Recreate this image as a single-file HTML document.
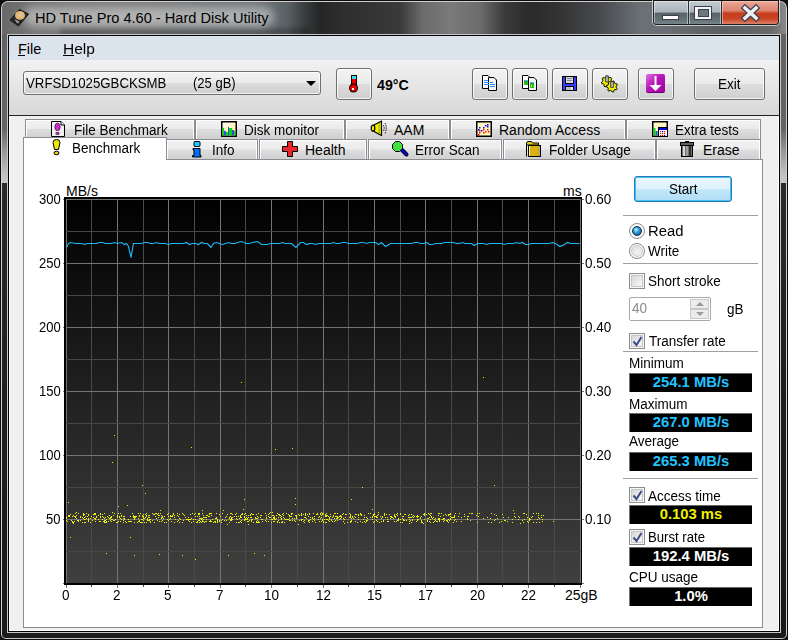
<!DOCTYPE html>
<html><head><meta charset="utf-8">
<style>
*{box-sizing:border-box}
html,body{margin:0;padding:0;width:788px;height:640px;overflow:hidden;background:#101010}
body{position:relative;font-family:"Liberation Sans",sans-serif;color:#000}
.a{position:absolute}
.t{position:absolute;white-space:nowrap;line-height:1}
svg{position:absolute;overflow:visible}
#frame{left:0;top:0;width:788px;height:640px;border-radius:8px 8px 6px 6px;background:#0c0c0c;}
#glassE{left:1px;top:1px;width:786px;height:638px;border-radius:7px 7px 5px 5px;border:1px solid #d0d0d0;border-bottom-color:#c8c8c8}
#glass{left:2px;top:2px;width:784px;height:636px;border-radius:6px 6px 4px 4px;
 background:linear-gradient(180deg,#626262 0,#646464 126px,#9a9a9a 150px,#c0c0c0 172px,#c8c8c8 181px,#2a2a2a 181px,#1e1e1e 400px,#1a1a1a 640px);}
#tbar{left:2px;top:2px;width:784px;height:32px;border-radius:6px 6px 0 0;
 background:linear-gradient(90deg,#686868 0,#747474 28px,#7a7a7a 120px,#6e7478 250px,#5a6266 285px,#3a3e40 302px,#262626 318px,#2e2e2e 340px,#3a3a3a 398px,#6a6a6a 420px,#7a7a7a 448px,#6c6c6c 478px,#3a3a3a 503px,#2a2a2a 528px,#343434 560px,#484a4e 598px,#6a7075 638px,#6a7075 660px,#5a5e62 720px,#6a6a6a 770px,#8a8a8a 784px);}
#inner1{left:7px;top:34px;width:774px;height:599px;border:1px solid #c8c8c8;}
#inner2{left:8px;top:35px;width:772px;height:597px;border:1px solid #000;background:#f0f0f0;box-shadow:inset 1px 1px 0 #fff,inset -1px -1px 0 #fff}
#menubar{left:9px;top:36px;width:770px;height:24px;background:#dbe3ed}
#toolbar{left:9px;top:60px;width:770px;height:55px;background:linear-gradient(180deg,#f1f1f1 0,#e6e6e6 25px,#d8d8d8 55px)}
#tbline{left:9px;top:115px;width:770px;height:1px;background:#222}
.btn{position:absolute;border:1px solid #707070;border-radius:3px;
 background:linear-gradient(180deg,#f2f2f2 0,#ebebeb 50%,#dddddd 50%,#cfcfcf 100%);box-shadow:inset 0 0 0 1px rgba(255,255,255,.75)}
.tab{position:absolute;border:1px solid #898c95;border-bottom:none;
 background:linear-gradient(180deg,#f2f2f2 0,#ebebeb 45%,#dddddd 50%,#cfcfcf 100%);box-shadow:inset 1px 1px 0 #fff,inset -1px 0 0 #fff}
.tt{position:absolute;white-space:nowrap;line-height:1;font-size:14px;transform:scaleX(.965);transform-origin:0 0}
#panel{left:23px;top:159px;width:740px;height:469px;border:1px solid #898c95;background:#fff}
.lbl{position:absolute;white-space:nowrap;line-height:1;font-size:14px;transform:scaleX(.965);transform-origin:0 0}
.box{position:absolute;left:629px;width:123px;height:19px;background:#000;border-top:1px solid #666;border-left:1px solid #777;color:#20c4ff;font-weight:bold;font-size:14.8px;text-align:center;line-height:1;padding-top:1px}
.sep{position:absolute;left:623px;width:135px;height:1px;background:#a0a0a0}
.cb{position:absolute;left:629px;width:16px;height:16px;border:1px solid #8e8f8f;background:linear-gradient(135deg,#cfcfcf 0,#f2f2f2 70%,#fafafa 100%);box-shadow:inset 0 0 0 1px #f6f6f6, inset 0 0 0 2px #c6c6c6}
</style></head>
<body>
<div id="frame" class="a"></div>
<div id="glass" class="a"></div>
<div id="tbar" class="a"></div>
<div id="glassE" class="a"></div>
<!-- title glow -->
<div class="a" style="left:60px;top:26px;width:250px;height:8px;background:linear-gradient(180deg,rgba(20,20,20,0) 0,rgba(20,20,20,.55) 100%);filter:blur(2px)"></div>
<div class="a" style="left:24px;top:7px;width:250px;height:20px;border-radius:10px;background:rgba(235,235,235,.5);filter:blur(5px)"></div>
<div id="inner1" class="a"></div>
<div id="inner2" class="a"></div>
<div id="menubar" class="a"></div>
<div id="toolbar" class="a"></div>
<div id="tbline" class="a"></div>

<!-- hdd icon -->
<svg style="left:8px;top:6px" width="24" height="24" viewBox="0 0 24 24">
 <path d="M11.5 3.5 L20.5 8 L10.5 20 L2 14 Z" fill="#2a2a2a" stroke="#111" stroke-width="1"/>
 <ellipse cx="12" cy="9.4" rx="5" ry="4.3" fill="#e4b870"/>
 <ellipse cx="12.6" cy="9" rx="1.8" ry="1.5" fill="#c8c8d0"/>
 <path d="M7 14 L11 16 M8 15.5 L10.5 17" stroke="#bbb" stroke-width="1"/>
</svg>
<div class="t" style="left:35px;top:11px;font-size:14.6px;color:#000">HD Tune Pro 4.60 - Hard Disk Utility</div>

<!-- caption buttons -->
<div class="a" style="left:652px;top:0;width:128px;height:26px;border:1px solid rgba(235,235,235,.75);border-top:none;border-radius:0 0 5px 5px"></div>
<div class="a" style="left:653px;top:0;width:126px;height:25px;border:1px solid #1e1e1e;border-top:1px solid #111;border-radius:0 0 4px 4px;overflow:hidden">
 <div class="a" style="left:0;top:0;width:34px;height:24px;background:linear-gradient(180deg,#c4ccd0 0,#aab4b8 45%,#56646a 52%,#667478 80%,#7c8a90 100%);box-shadow:inset 0 0 0 1px rgba(255,255,255,.45)"></div>
 <div class="a" style="left:34px;top:0;width:1px;height:24px;background:#2a3034"></div>
 <div class="a" style="left:35px;top:0;width:32px;height:24px;background:linear-gradient(180deg,#c4ccd0 0,#aab4b8 45%,#56646a 52%,#667478 80%,#7c8a90 100%);box-shadow:inset 0 0 0 1px rgba(255,255,255,.45)"></div>
 <div class="a" style="left:67px;top:0;width:1px;height:24px;background:#2a3034"></div>
 <div class="a" style="left:68px;top:0;width:58px;height:24px;background:linear-gradient(180deg,#eaa898 0,#dc8470 40%,#c83c1c 52%,#c84828 75%,#e08c78 100%);box-shadow:inset 0 0 0 1px rgba(255,220,210,.5)"></div>
</div>
<div class="a" style="left:662px;top:15px;width:17px;height:5px;background:#fff;border:1px solid #3a4050"></div>
<div class="a" style="left:694px;top:6px;width:18px;height:14px;border:1px solid #3a4050;background:#f4f4f4"></div>
<div class="a" style="left:698px;top:9px;width:11px;height:8px;background:#6a787e;border:1px solid #3a4050"></div>
<svg style="left:742px;top:5px" width="17" height="16" viewBox="0 0 17 16">
 <path d="M3 3 L14 13 M14 3 L3 13" stroke="#3a4050" stroke-width="6" stroke-linecap="square"/>
 <path d="M3 3 L14 13 M14 3 L3 13" stroke="#f0f0f0" stroke-width="3.6" stroke-linecap="square"/>
</svg>

<!-- menu -->
<div class="t" style="left:18px;top:42px;font-size:14.5px">File</div>
<div class="a" style="left:18px;top:55px;width:7px;height:1px;background:#000"></div>
<div class="t" style="left:63px;top:42px;font-size:14.5px;transform:scaleX(1.07);transform-origin:0 0">Help</div>
<div class="a" style="left:63px;top:55px;width:11px;height:1px;background:#000"></div>

<!-- toolbar -->
<div class="btn" style="left:23px;top:71px;width:298px;height:24px"></div>
<div class="t" style="left:26px;top:76px;font-size:14px;transform:scaleX(.945);transform-origin:0 0">VRFSD1025GBCKSMB</div>
<div class="t" style="left:193px;top:76px;font-size:14px;transform:scaleX(.93);transform-origin:0 0">(25 gB)</div>
<div class="a" style="left:306px;top:81px;width:0;height:0;border-left:5px solid transparent;border-right:5px solid transparent;border-top:5px solid #000"></div>

<div class="btn" style="left:336px;top:68px;width:36px;height:32px"></div>
<svg style="left:348px;top:74px" width="11" height="19" viewBox="0 0 11 19">
 <rect x="3" y="1" width="6" height="12" fill="#000"/>
 <rect x="4" y="2" width="4" height="3" fill="#30e0f0"/>
 <rect x="4" y="5" width="4" height="8" fill="#e80000"/>
 <circle cx="5.5" cy="14" r="4.5" fill="#000"/>
 <circle cx="5.5" cy="14" r="3.5" fill="#e80000"/>
 <rect x="4" y="14" width="2" height="2" fill="#fff"/>
</svg>
<div class="t" style="left:377px;top:78px;font-size:14.2px;font-weight:bold">49°C</div>

<div class="btn" style="left:472px;top:68px;width:36px;height:32px"></div>
<svg style="left:482px;top:75px" width="16" height="17" viewBox="0 0 16 17">
 <path d="M0.5 0.5 H6 L7.5 2 V13.5 H0.5 Z" fill="#fff" stroke="#000"/>
 <path d="M6.5 2.5 H12 L14.5 5 V15.5 H6.5 Z" fill="#f4f4f4" stroke="#000"/>
 <rect x="2" y="5" width="4" height="1" fill="#1e90ff"/><rect x="2" y="7" width="5" height="1" fill="#1e90ff"/><rect x="2" y="9" width="5" height="1" fill="#1e90ff"/>
 <rect x="8" y="7" width="3" height="1" fill="#1e90ff"/><rect x="8" y="9" width="5" height="1" fill="#1e90ff"/><rect x="8" y="11" width="5" height="1" fill="#1e90ff"/>
</svg>
<div class="btn" style="left:512px;top:68px;width:36px;height:32px"></div>
<svg style="left:522px;top:75px" width="16" height="17" viewBox="0 0 16 17">
 <path d="M0.5 0.5 H6 L7.5 2 V13.5 H0.5 Z" fill="#fff" stroke="#000"/>
 <path d="M6.5 2.5 H12 L14.5 5 V15.5 H6.5 Z" fill="#f4f4f4" stroke="#000"/>
 <rect x="2" y="5" width="4" height="5" fill="#20c020"/><rect x="2" y="5" width="4" height="1" fill="#30c0f0"/><rect x="3" y="6" width="1" height="1" fill="#e00"/>
 <rect x="8" y="7" width="4" height="6" fill="#20c020"/><rect x="8" y="7" width="4" height="1" fill="#30c0f0"/><rect x="9" y="8" width="1" height="1" fill="#e00"/><rect x="9" y="10" width="1" height="2" fill="#ee0"/>
</svg>
<div class="btn" style="left:552px;top:68px;width:36px;height:32px"></div>
<svg style="left:562px;top:76px" width="16" height="15" viewBox="0 0 16 15">
 <rect x="0.5" y="0.5" width="14" height="14" fill="#3a3aff" stroke="#000"/>
 <rect x="3.5" y="0.5" width="8" height="7" fill="#d8d8d8" stroke="#000"/>
 <rect x="5" y="2" width="5" height="1" fill="#888"/><rect x="5" y="4" width="5" height="1" fill="#888"/>
 <rect x="3.5" y="10.5" width="8" height="4" fill="#bbb" stroke="#000"/>
 <rect x="9" y="11" width="2" height="3" fill="#eee"/>
</svg>
<div class="btn" style="left:592px;top:68px;width:36px;height:32px"></div>
<svg style="left:601px;top:75px" width="17" height="17" viewBox="0 0 17 17">
 <path d="M11.58,6.99 L11.33,8.22 L9.61,8.65 L9.04,9.40 L9.09,11.17 L7.98,11.74 L6.57,10.66 L5.63,10.68 L4.28,11.83 L3.14,11.31 L3.10,9.54 L2.50,8.82 L0.76,8.48 L0.45,7.26 L1.82,6.13 L2.00,5.21 L1.19,3.64 L1.94,2.64 L3.68,3.00 L4.52,2.57 L5.24,0.95 L6.49,0.92 L7.29,2.50 L8.15,2.89 L9.86,2.44 L10.67,3.41 L9.93,5.02 L10.16,5.93Z" fill="#f0f000" stroke="#000" stroke-width="1"/>
 <path d="M16.18,13.62 L15.58,14.72 L13.81,14.62 L13.05,15.17 L12.58,16.87 L11.34,17.09 L10.32,15.64 L9.41,15.39 L7.78,16.08 L6.84,15.25 L7.33,13.55 L6.97,12.68 L5.41,11.84 L5.47,10.59 L7.11,9.91 L7.56,9.09 L7.25,7.34 L8.27,6.61 L9.82,7.47 L10.74,7.31 L11.91,5.97 L13.12,6.32 L13.41,8.06 L14.12,8.69 L15.89,8.77 L16.37,9.92 L15.19,11.24 L15.14,12.18Z" fill="#f0f000" stroke="#000" stroke-width="1"/>
 <rect x="4.7" y="1" width="2.6" height="6" fill="#b0b0c0" stroke="#222" stroke-width=".7"/>
 <rect x="9.7" y="6.5" width="2.6" height="6" fill="#b0b0c0" stroke="#222" stroke-width=".7"/>
</svg>
<div class="btn" style="left:638px;top:68px;width:36px;height:32px"></div>
<div class="a" style="left:646px;top:74px;width:19px;height:19px;border-radius:2px;background:linear-gradient(135deg,#e070e0 0,#b818b8 45%,#a000a0 100%);border-bottom:1px solid #700070"></div>
<svg style="left:648px;top:76px" width="15" height="15" viewBox="0 0 15 15">
 <rect x="6.5" y="0" width="2" height="10" fill="#fff"/>
 <path d="M1.5 9 L13.5 9 L7.5 15 Z" fill="#fff"/>
</svg>
<div class="btn" style="left:694px;top:68px;width:71px;height:32px"></div>
<div class="t" style="left:718px;top:77px;font-size:14px;transform:scaleX(.965);transform-origin:0 0">Exit</div>

<!-- tabs row 1 -->
<div class="tab" style="left:25px;top:119px;width:170px;height:20px"></div>
<div class="tab" style="left:195px;top:119px;width:150px;height:20px"></div>
<div class="tab" style="left:345px;top:119px;width:105px;height:20px"></div>
<div class="tab" style="left:450px;top:119px;width:176px;height:20px"></div>
<div class="tab" style="left:626px;top:119px;width:135px;height:20px"></div>
<div class="tt" style="left:74px;top:123px">File Benchmark</div>
<div class="tt" style="left:244px;top:123px">Disk monitor</div>
<div class="tt" style="left:394px;top:123px;transform:none">AAM</div>
<div class="tt" style="left:499px;top:123px;transform:none">Random Access</div>
<div class="tt" style="left:675px;top:123px">Extra tests</div>
<!-- row1 icons -->
<svg style="left:51px;top:121px" width="15" height="16" viewBox="0 0 15 16">
 <path d="M0.5 0.5 H10 L13.5 4 V15.5 H0.5 Z" fill="#f0f0f0" stroke="#000"/>
 <path d="M10 0.5 V4 H13.5" fill="#fff" stroke="#000"/>
 <ellipse cx="6.5" cy="6" rx="2.6" ry="3.8" fill="#e020e0" stroke="#222" stroke-width=".8"/>
 <rect x="5" y="11.5" width="3" height="2" fill="#e020e0" stroke="#222" stroke-width=".6"/>
</svg>
<svg style="left:221px;top:121px" width="16" height="16" viewBox="0 0 16 16">
 <defs><linearGradient id="yb" x1="0" y1="0" x2="1" y2="1"><stop offset="0" stop-color="#ffffff"/><stop offset="1" stop-color="#fff080"/></linearGradient></defs>
 <rect x="0.75" y="0.75" width="14.5" height="14.5" fill="url(#yb)" stroke="#000" stroke-width="1.5"/>
 <rect x="1.5" y="6.8" width="1.5" height="7.7" fill="#00e000"/>
 <rect x="3" y="9.9" width="2" height="4.6" fill="#4040ff"/>
 <rect x="5" y="11" width="2" height="3.5" fill="#00e000"/>
 <rect x="7" y="6" width="1" height="8.5" fill="#4040ff"/>
 <rect x="8" y="7" width="3" height="7.5" fill="#00e000"/>
 <rect x="11" y="9" width="2" height="5.5" fill="#4040ff"/>
 <rect x="13" y="10" width="1.5" height="4.5" fill="#00e000"/>
</svg>
<svg style="left:370px;top:120px" width="18" height="17" viewBox="0 0 18 17">
 <path d="M4 5 L11.5 1 V15.5 L4 11.5 Z" fill="#f0f000" stroke="#000" stroke-width="1.2" stroke-linejoin="round"/>
 <ellipse cx="3" cy="8.2" rx="1.8" ry="3" fill="#f0f000" stroke="#000" stroke-width="1.2"/>
 <path d="M9.2 3 V14" stroke="#333" stroke-width=".8" stroke-dasharray="1.2 1"/>
 <path d="M13.3 5 Q15 8.2 13.3 11.5" fill="none" stroke="#000" stroke-width="1" stroke-dasharray="1.4 .9"/>
 <path d="M15 3 Q17.6 8.2 15 13.5" fill="none" stroke="#000" stroke-width="1" stroke-dasharray="1.4 .9"/>
</svg>
<svg style="left:476px;top:121px" width="16" height="16" viewBox="0 0 16 16">
 <rect x="0.75" y="0.75" width="14.5" height="14.5" fill="#fff8c0" stroke="#000" stroke-width="1.5"/>
 <g fill="#0000ff"><rect x="3" y="6" width="1.5" height="1.5"/><rect x="2" y="8" width="1.5" height="1.5"/><rect x="5" y="9" width="1.5" height="1.5"/><rect x="7" y="6" width="1.5" height="1.5"/><rect x="9" y="4" width="1.5" height="1.5"/><rect x="11" y="3" width="1.5" height="1.5"/><rect x="11" y="5" width="1.5" height="1.5"/></g>
 <g fill="#ff0000"><rect x="3" y="9" width="1.5" height="1.5"/><rect x="3" y="11" width="1.5" height="1.5"/><rect x="7" y="8" width="1.5" height="1.5"/><rect x="7" y="11" width="1.5" height="1.5"/><rect x="9" y="10" width="1.5" height="1.5"/><rect x="11" y="8" width="1.5" height="1.5"/><rect x="12" y="10" width="1.5" height="1.5"/><rect x="2" y="13" width="1.5" height="1.5"/></g>
</svg>
<svg style="left:652px;top:121px" width="16" height="16" viewBox="0 0 16 16">
 <rect x="0.75" y="0.75" width="14.5" height="14.5" fill="#fff8c0" stroke="#000" stroke-width="1.5"/>
 <rect x="1.5" y="7" width="2" height="7.5" fill="#00e000"/><rect x="3.5" y="10" width="2" height="4.5" fill="#4040ff"/><rect x="5.5" y="11" width="1" height="3.5" fill="#00e000"/>
 <rect x="6.5" y="6.5" width="9" height="9" fill="#fff" stroke="#000"/>
 <rect x="7" y="7" width="8" height="2" fill="#0000e0"/>
 <g fill="#f00"><rect x="8" y="10" width="1.2" height="1.2"/><rect x="12" y="10" width="1.2" height="1.2"/><rect x="10" y="12" width="1.2" height="1.2"/><rect x="8" y="14" width="1.2" height="1"/></g>
 <g fill="#00f"><rect x="10" y="10" width="1.2" height="1.2"/><rect x="12" y="14" width="1.2" height="1"/></g>
 <rect x="8" y="12" width="1.2" height="1.2" fill="#0a0"/><rect x="12" y="12" width="1.2" height="1.2" fill="#f00"/><rect x="10" y="14" width="1.2" height="1" fill="#f00"/>
</svg>

<!-- tabs row 2 -->
<div class="tab" style="left:166px;top:139px;width:92px;height:21px"></div>
<div class="tab" style="left:259px;top:139px;width:108px;height:21px"></div>
<div class="tab" style="left:368px;top:139px;width:134px;height:21px"></div>
<div class="tab" style="left:503px;top:139px;width:153px;height:21px"></div>
<div class="tab" style="left:656px;top:139px;width:105px;height:21px"></div>
<div id="panel" class="a"></div>
<div class="a" style="left:23px;top:137px;width:144px;height:23px;border:1px solid #898c95;border-bottom:none;background:#fff"></div>
<div class="tt" style="left:72px;top:141px">Benchmark</div>
<div class="tt" style="left:212px;top:143px">Info</div>
<div class="tt" style="left:305px;top:143px;transform:none">Health</div>
<div class="tt" style="left:415px;top:143px">Error Scan</div>
<div class="tt" style="left:549px;top:143px;transform:scaleX(.975)">Folder Usage</div>
<div class="tt" style="left:703px;top:143px;transform:none">Erase</div>
<!-- row2 icons -->
<svg style="left:52px;top:139px" width="9" height="17" viewBox="0 0 9 17">
 <path d="M1 3.5 Q1 0.5 4.5 0.5 Q8 0.5 8 3.5 L6.5 10.5 H2.5 Z" fill="#e8e800" stroke="#000"/>
 <ellipse cx="4.5" cy="14" rx="2.5" ry="1.8" fill="#d8d800" stroke="#000"/>
</svg>
<svg style="left:192px;top:141px" width="10" height="17" viewBox="0 0 10 17">
 <rect x="2" y="0.5" width="6" height="5" rx="1" fill="#20c8ff" stroke="#000"/>
 <path d="M1 7.5 H8 V14.5 H9 V16 H0.5 V14.5 H2 V9 H1 Z" fill="#0070ff" stroke="#000"/>
</svg>
<svg style="left:282px;top:141px" width="17" height="16" viewBox="0 0 17 16">
 <path d="M5.5 0.5 H10.5 V5.5 H15.5 V10.5 H10.5 V15.5 H5.5 V10.5 H0.5 V5.5 H5.5 Z" fill="#e82828" stroke="#000"/>
</svg>
<svg style="left:392px;top:141px" width="17" height="17" viewBox="0 0 17 17">
 <path d="M9.5 8.5 L14.5 13.5" stroke="#000" stroke-width="4" stroke-linecap="round"/>
 <path d="M9.5 8.5 L14.5 13.5" stroke="#0000e0" stroke-width="2.4" stroke-linecap="round"/>
 <path d="M3.5 0.5 H7.5 L10.5 3.5 V7.5 L7.5 10.5 H3.5 L0.5 7.5 V3.5 Z" fill="#40e040" stroke="#000"/>
</svg>
<svg style="left:526px;top:141px" width="16" height="16" viewBox="0 0 16 16">
 <path d="M0.5 15.5 V2 L1.5 0.5 H5.5 L6.5 2 H12.5 V4 H0.5" fill="#e8c820" stroke="#000"/>
 <rect x="2.5" y="4.5" width="12" height="11" fill="#dcb010" stroke="#000"/>
 <rect x="3" y="5" width="1" height="10" fill="#fff8a0"/><rect x="12" y="5" width="1" height="10" fill="#a0a0a0"/>
</svg>
<svg style="left:680px;top:141px" width="15" height="16" viewBox="0 0 15 16">
 <rect x="0.5" y="1.5" width="13" height="3" fill="#606060" stroke="#000"/>
 <rect x="5" y="0" width="4" height="2" fill="#000"/>
 <rect x="1.5" y="4.5" width="11" height="11" fill="#707070" stroke="#000"/>
 <rect x="3" y="5" width="2" height="10" fill="#d8d8d8"/><rect x="6" y="5" width="2" height="10" fill="#a0a0a0"/><rect x="9" y="5" width="2" height="10" fill="#303030"/>
</svg>

<svg width="600" height="600" style="position:absolute;left:0;top:0">
<defs><linearGradient id="cbg" x1="0" y1="0" x2="0" y2="1"><stop offset="0" stop-color="#000"/><stop offset="1" stop-color="#404040"/></linearGradient></defs>
<rect x="64" y="197" width="518" height="388" fill="url(#cbg)"/>
<line x1="66.5" y1="199" x2="66.5" y2="583" stroke="#747474"/><line x1="66.5" y1="585" x2="66.5" y2="588" stroke="#747474"/><line x1="91.5" y1="199" x2="91.5" y2="583" stroke="#4a4a4a"/><line x1="91.5" y1="585" x2="91.5" y2="587" stroke="#4a4a4a"/><line x1="117.5" y1="199" x2="117.5" y2="583" stroke="#747474"/><line x1="117.5" y1="585" x2="117.5" y2="588" stroke="#747474"/><line x1="143.5" y1="199" x2="143.5" y2="583" stroke="#4a4a4a"/><line x1="143.5" y1="585" x2="143.5" y2="587" stroke="#4a4a4a"/><line x1="168.5" y1="199" x2="168.5" y2="583" stroke="#747474"/><line x1="168.5" y1="585" x2="168.5" y2="588" stroke="#747474"/><line x1="194.5" y1="199" x2="194.5" y2="583" stroke="#4a4a4a"/><line x1="194.5" y1="585" x2="194.5" y2="587" stroke="#4a4a4a"/><line x1="220.5" y1="199" x2="220.5" y2="583" stroke="#747474"/><line x1="220.5" y1="585" x2="220.5" y2="588" stroke="#747474"/><line x1="245.5" y1="199" x2="245.5" y2="583" stroke="#4a4a4a"/><line x1="245.5" y1="585" x2="245.5" y2="587" stroke="#4a4a4a"/><line x1="271.5" y1="199" x2="271.5" y2="583" stroke="#747474"/><line x1="271.5" y1="585" x2="271.5" y2="588" stroke="#747474"/><line x1="297.5" y1="199" x2="297.5" y2="583" stroke="#4a4a4a"/><line x1="297.5" y1="585" x2="297.5" y2="587" stroke="#4a4a4a"/><line x1="323.5" y1="199" x2="323.5" y2="583" stroke="#747474"/><line x1="323.5" y1="585" x2="323.5" y2="588" stroke="#747474"/><line x1="348.5" y1="199" x2="348.5" y2="583" stroke="#4a4a4a"/><line x1="348.5" y1="585" x2="348.5" y2="587" stroke="#4a4a4a"/><line x1="374.5" y1="199" x2="374.5" y2="583" stroke="#747474"/><line x1="374.5" y1="585" x2="374.5" y2="588" stroke="#747474"/><line x1="400.5" y1="199" x2="400.5" y2="583" stroke="#4a4a4a"/><line x1="400.5" y1="585" x2="400.5" y2="587" stroke="#4a4a4a"/><line x1="425.5" y1="199" x2="425.5" y2="583" stroke="#747474"/><line x1="425.5" y1="585" x2="425.5" y2="588" stroke="#747474"/><line x1="451.5" y1="199" x2="451.5" y2="583" stroke="#4a4a4a"/><line x1="451.5" y1="585" x2="451.5" y2="587" stroke="#4a4a4a"/><line x1="477.5" y1="199" x2="477.5" y2="583" stroke="#747474"/><line x1="477.5" y1="585" x2="477.5" y2="588" stroke="#747474"/><line x1="502.5" y1="199" x2="502.5" y2="583" stroke="#4a4a4a"/><line x1="502.5" y1="585" x2="502.5" y2="587" stroke="#4a4a4a"/><line x1="528.5" y1="199" x2="528.5" y2="583" stroke="#747474"/><line x1="528.5" y1="585" x2="528.5" y2="588" stroke="#747474"/><line x1="554.5" y1="199" x2="554.5" y2="583" stroke="#4a4a4a"/><line x1="554.5" y1="585" x2="554.5" y2="587" stroke="#4a4a4a"/><line x1="580.5" y1="199" x2="580.5" y2="583" stroke="#747474"/><line x1="580.5" y1="585" x2="580.5" y2="588" stroke="#747474"/><line x1="66" y1="199.5" x2="581" y2="199.5" stroke="#747474"/><line x1="63" y1="199.5" x2="64" y2="199.5" stroke="#747474"/><line x1="582" y1="199.5" x2="584" y2="199.5" stroke="#747474"/><line x1="66" y1="231.5" x2="581" y2="231.5" stroke="#474747"/><line x1="66" y1="263.5" x2="581" y2="263.5" stroke="#747474"/><line x1="63" y1="263.5" x2="64" y2="263.5" stroke="#747474"/><line x1="582" y1="263.5" x2="584" y2="263.5" stroke="#747474"/><line x1="66" y1="295.5" x2="581" y2="295.5" stroke="#474747"/><line x1="66" y1="327.5" x2="581" y2="327.5" stroke="#747474"/><line x1="63" y1="327.5" x2="64" y2="327.5" stroke="#747474"/><line x1="582" y1="327.5" x2="584" y2="327.5" stroke="#747474"/><line x1="66" y1="359.5" x2="581" y2="359.5" stroke="#474747"/><line x1="66" y1="391.5" x2="581" y2="391.5" stroke="#747474"/><line x1="63" y1="391.5" x2="64" y2="391.5" stroke="#747474"/><line x1="582" y1="391.5" x2="584" y2="391.5" stroke="#747474"/><line x1="66" y1="423.5" x2="581" y2="423.5" stroke="#474747"/><line x1="66" y1="455.5" x2="581" y2="455.5" stroke="#747474"/><line x1="63" y1="455.5" x2="64" y2="455.5" stroke="#747474"/><line x1="582" y1="455.5" x2="584" y2="455.5" stroke="#747474"/><line x1="66" y1="487.5" x2="581" y2="487.5" stroke="#474747"/><line x1="66" y1="519.5" x2="581" y2="519.5" stroke="#747474"/><line x1="63" y1="519.5" x2="64" y2="519.5" stroke="#747474"/><line x1="582" y1="519.5" x2="584" y2="519.5" stroke="#747474"/><line x1="66" y1="551.5" x2="581" y2="551.5" stroke="#474747"/><line x1="66" y1="583.5" x2="581" y2="583.5" stroke="#747474"/><line x1="63" y1="583.5" x2="64" y2="583.5" stroke="#747474"/><line x1="582" y1="583.5" x2="584" y2="583.5" stroke="#747474"/>
<path d="M66.5,247.5 L67.5,245.5 L68.5,243.5 L70.5,242.5 L75.5,243.5 L78.5,243.5 L81.5,243.5 L84.5,244.5 L87.5,243.5 L90.5,243.5 L93.5,243.5 L96.5,243.5 L99.5,242.5 L102.5,242.5 L105.5,243.5 L108.5,243.5 L111.5,243.5 L114.5,242.5 L117.5,243.5 L121.5,242.5 L124.5,244.5 L126.5,243.5 L128.5,246.5 L131.0,257.5 L133.5,243.5 L138.5,243.5 L141.5,243.5 L144.5,242.5 L147.5,242.5 L150.5,243.5 L153.5,243.5 L156.5,242.5 L159.5,243.5 L162.5,243.5 L165.5,243.5 L168.5,244.5 L171.5,243.5 L174.5,243.5 L177.5,243.5 L180.5,243.5 L183.5,243.5 L186.5,242.5 L189.5,244.5 L192.5,243.5 L195.5,243.5 L198.5,244.5 L201.5,242.5 L204.5,243.5 L207.5,243.5 L211.0,247.5 L213.5,243.5 L216.5,242.5 L219.5,243.5 L222.5,244.5 L225.5,243.5 L228.5,242.5 L231.5,243.5 L234.5,243.5 L237.5,242.5 L241.5,241.5 L246.5,243.5 L249.5,243.5 L252.5,242.5 L257.5,241.5 L261.5,244.5 L264.5,244.5 L267.5,244.5 L270.5,243.5 L273.5,243.5 L276.5,243.5 L279.5,243.5 L282.5,242.5 L285.5,243.5 L288.5,243.5 L291.5,243.5 L295.9,247.5 L300.5,242.5 L303.5,242.5 L306.5,244.5 L309.5,243.5 L312.5,243.5 L315.5,244.5 L318.5,243.5 L321.5,243.5 L324.5,243.5 L327.5,243.5 L330.5,243.5 L333.5,242.5 L336.5,243.5 L339.5,243.5 L342.5,242.5 L345.5,242.5 L348.5,243.5 L351.5,243.5 L354.5,243.5 L357.5,243.5 L360.5,242.5 L363.5,242.5 L366.5,243.5 L369.5,242.5 L372.5,242.5 L375.5,242.5 L378.5,244.5 L381.5,242.5 L385.5,246.5 L390.5,243.5 L393.5,243.5 L396.5,243.5 L399.5,243.5 L402.5,243.5 L405.5,243.5 L408.5,243.5 L411.5,243.5 L414.5,242.5 L417.5,242.5 L420.5,243.5 L423.5,243.5 L426.5,242.5 L429.5,244.5 L432.5,244.5 L435.5,243.5 L438.5,243.5 L441.5,243.5 L444.5,242.5 L447.5,242.5 L450.5,242.5 L453.5,242.5 L456.5,243.5 L459.5,243.5 L462.5,242.5 L465.5,243.5 L468.5,243.5 L471.5,243.5 L474.2,245.5 L477.5,243.5 L480.5,243.5 L483.5,243.5 L486.5,244.5 L489.5,243.5 L492.5,243.5 L495.5,243.5 L498.5,243.5 L501.5,243.5 L504.5,244.5 L507.5,243.5 L510.5,243.5 L513.5,243.5 L516.5,242.5 L519.5,243.5 L522.5,242.5 L525.5,244.5 L528.5,244.5 L531.5,243.5 L534.5,243.5 L537.5,243.5 L540.5,243.5 L543.5,243.5 L546.5,243.5 L549.5,243.5 L552.5,242.5 L555.5,243.5 L559.9,246.5 L564.5,244.5 L567.5,242.5 L570.5,243.5 L573.5,243.5 L576.5,243.5 L579.5,243.5" fill="none" stroke="#1ab8f4" stroke-width="1.15"/>
<path d="M88,518h1v1h-1zM308,521h1v1h-1zM285,519h1v1h-1zM319,521h1v1h-1zM266,515h1v1h-1zM202,521h1v1h-1zM217,519h1v1h-1zM403,520h1v1h-1zM320,513h1v1h-1zM309,513h1v1h-1zM361,514h1v1h-1zM395,516h1v1h-1zM152,520h1v1h-1zM133,516h1v1h-1zM312,518h1v1h-1zM289,516h1v1h-1zM270,512h1v1h-1zM125,521h1v1h-1zM102,519h1v1h-1zM198,514h1v1h-1zM251,517h1v1h-1zM373,515h1v1h-1zM145,517h1v1h-1zM429,514h1v1h-1zM137,522h1v1h-1zM114,520h1v1h-1zM524,513h1v1h-1zM240,516h1v1h-1zM296,515h1v1h-1zM96,517h1v1h-1zM414,516h1v1h-1zM319,516h1v1h-1zM308,516h1v1h-1zM349,517h1v1h-1zM372,519h1v1h-1zM68,516h1v1h-1zM121,519h1v1h-1zM467,518h1v1h-1zM216,518h1v1h-1zM436,521h1v1h-1zM342,514h1v1h-1zM110,518h1v1h-1zM376,516h1v1h-1zM80,517h1v1h-1zM289,520h1v1h-1zM278,520h1v1h-1zM532,516h1v1h-1zM281,516h1v1h-1zM102,514h1v1h-1zM326,515h1v1h-1zM262,521h1v1h-1zM251,521h1v1h-1zM284,518h1v1h-1zM448,522h1v1h-1zM197,522h1v1h-1zM387,521h1v1h-1zM87,516h1v1h-1zM273,517h1v1h-1zM265,513h1v1h-1zM497,518h1v1h-1zM190,519h1v1h-1zM231,520h1v1h-1zM205,517h1v1h-1zM327,515h1v1h-1zM402,518h1v1h-1zM76,515h1v1h-1zM360,521h1v1h-1zM352,517h1v1h-1zM341,517h1v1h-1zM411,514h1v1h-1zM322,513h1v1h-1zM247,519h1v1h-1zM216,513h1v1h-1zM444,520h1v1h-1zM82,522h1v1h-1zM384,515h1v1h-1zM141,519h1v1h-1zM250,515h1v1h-1zM133,515h1v1h-1zM376,520h1v1h-1zM353,518h1v1h-1zM345,514h1v1h-1zM409,517h1v1h-1zM177,521h1v1h-1zM83,514h1v1h-1zM94,514h1v1h-1zM326,519h1v1h-1zM456,521h1v1h-1zM284,522h1v1h-1zM406,520h1v1h-1zM323,513h1v1h-1zM323,522h1v1h-1zM170,518h1v1h-1zM136,516h1v1h-1zM72,522h1v1h-1zM307,514h1v1h-1zM139,521h1v1h-1zM128,521h1v1h-1zM273,521h1v1h-1zM190,514h1v1h-1zM288,519h1v1h-1zM410,517h1v1h-1zM148,517h1v1h-1zM372,509h1v1h-1zM140,513h1v1h-1zM402,522h1v1h-1zM140,522h1v1h-1zM447,521h1v1h-1zM68,515h1v1h-1zM266,518h1v1h-1zM299,515h1v1h-1zM82,517h1v1h-1zM459,513h1v1h-1zM216,517h1v1h-1zM417,516h1v1h-1zM110,517h1v1h-1zM394,514h1v1h-1zM155,516h1v1h-1zM334,518h1v1h-1zM409,521h1v1h-1zM83,518h1v1h-1zM94,518h1v1h-1zM239,518h1v1h-1zM303,521h1v1h-1zM209,514h1v1h-1zM437,521h1v1h-1zM261,515h1v1h-1zM429,517h1v1h-1zM504,520h1v1h-1zM197,521h1v1h-1zM201,519h1v1h-1zM234,516h1v1h-1zM398,520h1v1h-1zM421,522h1v1h-1zM356,514h1v1h-1zM147,520h1v1h-1zM443,519h1v1h-1zM390,516h1v1h-1zM117,516h1v1h-1zM139,516h1v1h-1zM296,518h1v1h-1zM288,514h1v1h-1zM340,515h1v1h-1zM120,521h1v1h-1zM231,519h1v1h-1zM246,517h1v1h-1zM391,517h1v1h-1zM432,518h1v1h-1zM424,514h1v1h-1zM132,513h1v1h-1zM277,513h1v1h-1zM330,516h1v1h-1zM341,516h1v1h-1zM352,516h1v1h-1zM527,517h1v1h-1zM310,519h1v1h-1zM250,514h1v1h-1zM280,515h1v1h-1zM193,519h1v1h-1zM257,522h1v1h-1zM174,515h1v1h-1zM417,520h1v1h-1zM334,513h1v1h-1zM386,514h1v1h-1zM143,518h1v1h-1zM94,513h1v1h-1zM83,513h1v1h-1zM314,516h1v1h-1zM197,516h1v1h-1zM295,521h1v1h-1zM325,522h1v1h-1zM261,519h1v1h-1zM189,521h1v1h-1zM200,518h1v1h-1zM139,520h1v1h-1zM538,513h1v1h-1zM318,519h1v1h-1zM329,519h1v1h-1zM223,510h1v1h-1zM212,519h1v1h-1zM447,520h1v1h-1zM435,518h1v1h-1zM405,514h1v1h-1zM98,515h1v1h-1zM154,514h1v1h-1zM333,516h1v1h-1zM527,521h1v1h-1zM131,521h1v1h-1zM519,517h1v1h-1zM542,519h1v1h-1zM508,517h1v1h-1zM272,515h1v1h-1zM417,515h1v1h-1zM458,516h1v1h-1zM238,522h1v1h-1zM177,515h1v1h-1zM461,521h1v1h-1zM439,521h1v1h-1zM378,514h1v1h-1zM124,518h1v1h-1zM75,513h1v1h-1zM314,520h1v1h-1zM317,513h1v1h-1zM211,513h1v1h-1zM398,519h1v1h-1zM222,513h1v1h-1zM443,518h1v1h-1zM431,516h1v1h-1zM147,519h1v1h-1zM139,515h1v1h-1zM117,515h1v1h-1zM337,518h1v1h-1zM86,518h1v1h-1zM150,521h1v1h-1zM161,521h1v1h-1zM538,517h1v1h-1zM231,518h1v1h-1zM455,519h1v1h-1zM424,513h1v1h-1zM279,522h1v1h-1zM173,513h1v1h-1zM382,516h1v1h-1zM112,512h1v1h-1zM374,521h1v1h-1zM291,514h1v1h-1zM355,517h1v1h-1zM71,520h1v1h-1zM268,521h1v1h-1zM272,519h1v1h-1zM260,517h1v1h-1zM230,513h1v1h-1zM143,517h1v1h-1zM241,522h1v1h-1zM450,516h1v1h-1zM158,515h1v1h-1zM199,516h1v1h-1zM367,518h1v1h-1zM302,519h1v1h-1zM242,514h1v1h-1zM283,515h1v1h-1zM74,521h1v1h-1zM253,514h1v1h-1zM451,517h1v1h-1zM66,517h1v1h-1zM219,521h1v1h-1zM518,516h1v1h-1zM192,513h1v1h-1zM337,513h1v1h-1zM412,516h1v1h-1zM109,515h1v1h-1zM86,513h1v1h-1zM172,516h1v1h-1zM329,518h1v1h-1zM340,518h1v1h-1zM496,515h1v1h-1zM70,514h1v1h-1zM134,517h1v1h-1zM413,517h1v1h-1zM162,517h1v1h-1zM226,520h1v1h-1zM374,516h1v1h-1zM154,522h1v1h-1zM438,519h1v1h-1zM123,516h1v1h-1zM257,516h1v1h-1zM268,516h1v1h-1zM355,521h1v1h-1zM104,521h1v1h-1zM241,517h1v1h-1zM207,515h1v1h-1zM427,518h1v1h-1zM439,520h1v1h-1zM135,517h1v1h-1zM199,520h1v1h-1zM210,520h1v1h-1zM188,520h1v1h-1zM325,516h1v1h-1zM116,522h1v1h-1zM400,519h1v1h-1zM336,516h1v1h-1zM74,516h1v1h-1zM85,516h1v1h-1zM105,522h1v1h-1zM454,517h1v1h-1zM200,521h1v1h-1zM211,521h1v1h-1zM203,517h1v1h-1zM412,520h1v1h-1zM78,513h1v1h-1zM142,516h1v1h-1zM111,519h1v1h-1zM245,519h1v1h-1zM309,522h1v1h-1zM248,515h1v1h-1zM397,513h1v1h-1zM449,514h1v1h-1zM146,513h1v1h-1zM430,519h1v1h-1zM146,522h1v1h-1zM123,520h1v1h-1zM541,517h1v1h-1zM238,516h1v1h-1zM313,519h1v1h-1zM324,519h1v1h-1zM533,513h1v1h-1zM305,515h1v1h-1zM533,522h1v1h-1zM282,522h1v1h-1zM271,522h1v1h-1zM274,518h1v1h-1zM400,514h1v1h-1zM389,514h1v1h-1zM366,521h1v1h-1zM377,521h1v1h-1zM358,517h1v1h-1zM503,517h1v1h-1zM537,519h1v1h-1zM286,519h1v1h-1zM350,522h1v1h-1zM275,519h1v1h-1zM169,519h1v1h-1zM203,521h1v1h-1zM161,515h1v1h-1zM172,515h1v1h-1zM236,518h1v1h-1zM404,520h1v1h-1zM381,518h1v1h-1zM434,521h1v1h-1zM347,522h1v1h-1zM100,514h1v1h-1zM134,516h1v1h-1zM256,514h1v1h-1zM301,513h1v1h-1zM529,520h1v1h-1zM237,519h1v1h-1zM195,513h1v1h-1zM438,518h1v1h-1zM164,516h1v1h-1zM179,514h1v1h-1zM396,521h1v1h-1zM104,520h1v1h-1zM514,513h1v1h-1zM73,523h1v1h-1zM439,519h1v1h-1zM450,519h1v1h-1zM188,519h1v1h-1zM168,513h1v1h-1zM255,518h1v1h-1zM138,518h1v1h-1zM526,514h1v1h-1zM294,518h1v1h-1zM171,516h1v1h-1zM66,520h1v1h-1zM118,521h1v1h-1zM350,517h1v1h-1zM518,519h1v1h-1zM244,517h1v1h-1zM308,520h1v1h-1zM236,513h1v1h-1zM370,513h1v1h-1zM150,519h1v1h-1zM236,522h1v1h-1zM202,520h1v1h-1zM142,515h1v1h-1zM328,516h1v1h-1zM339,516h1v1h-1zM403,519h1v1h-1zM351,518h1v1h-1zM245,518h1v1h-1zM256,518h1v1h-1zM312,517h1v1h-1zM289,515h1v1h-1zM214,521h1v1h-1zM438,513h1v1h-1zM206,517h1v1h-1zM198,513h1v1h-1zM373,514h1v1h-1zM179,518h1v1h-1zM290,516h1v1h-1zM388,521h1v1h-1zM305,514h1v1h-1zM282,521h1v1h-1zM199,514h1v1h-1zM240,515h1v1h-1zM427,521h1v1h-1zM274,517h1v1h-1zM408,517h1v1h-1zM494,520h1v1h-1zM400,513h1v1h-1zM180,519h1v1h-1zM221,520h1v1h-1zM464,516h1v1h-1zM160,513h1v1h-1zM138,513h1v1h-1zM366,520h1v1h-1zM283,513h1v1h-1zM400,522h1v1h-1zM107,516h1v1h-1zM96,516h1v1h-1zM205,521h1v1h-1zM350,521h1v1h-1zM327,519h1v1h-1zM88,521h1v1h-1zM536,522h1v1h-1zM487,517h1v1h-1zM99,521h1v1h-1zM225,517h1v1h-1zM370,517h1v1h-1zM119,517h1v1h-1zM217,522h1v1h-1zM183,520h1v1h-1zM100,513h1v1h-1zM328,520h1v1h-1zM362,522h1v1h-1zM343,518h1v1h-1zM77,520h1v1h-1zM80,516h1v1h-1zM69,516h1v1h-1zM529,519h1v1h-1zM312,521h1v1h-1zM206,521h1v1h-1zM490,518h1v1h-1zM430,513h1v1h-1zM251,520h1v1h-1zM430,522h1v1h-1zM313,513h1v1h-1zM179,522h1v1h-1zM290,520h1v1h-1zM73,522h1v1h-1zM106,519h1v1h-1zM84,519h1v1h-1zM95,519h1v1h-1zM274,521h1v1h-1zM304,522h1v1h-1zM315,522h1v1h-1zM255,517h1v1h-1zM377,515h1v1h-1zM149,517h1v1h-1zM224,520h1v1h-1zM316,514h1v1h-1zM350,516h1v1h-1zM244,516h1v1h-1zM528,522h1v1h-1zM277,522h1v1h-1zM247,518h1v1h-1zM411,522h1v1h-1zM343,513h1v1h-1zM111,517h1v1h-1zM384,514h1v1h-1zM309,520h1v1h-1zM331,520h1v1h-1zM278,514h1v1h-1zM364,517h1v1h-1zM80,520h1v1h-1zM479,513h1v1h-1zM281,519h1v1h-1zM239,522h1v1h-1zM373,522h1v1h-1zM429,521h1v1h-1zM346,514h1v1h-1zM502,514h1v1h-1zM95,514h1v1h-1zM84,514h1v1h-1zM323,521h1v1h-1zM274,516h1v1h-1zM304,517h1v1h-1zM72,521h1v1h-1zM441,513h1v1h-1zM232,519h1v1h-1zM358,515h1v1h-1zM335,513h1v1h-1zM372,517h1v1h-1zM76,518h1v1h-1zM129,521h1v1h-1zM88,520h1v1h-1zM236,516h1v1h-1zM266,517h1v1h-1zM411,517h1v1h-1zM258,513h1v1h-1zM269,513h1v1h-1zM434,519h1v1h-1zM478,516h1v1h-1zM258,522h1v1h-1zM467,516h1v1h-1zM152,513h1v1h-1zM141,522h1v1h-1zM529,518h1v1h-1zM144,518h1v1h-1zM69,515h1v1h-1zM289,518h1v1h-1zM364,521h1v1h-1zM513,510h1v1h-1zM345,517h1v1h-1zM326,513h1v1h-1zM471,513h1v1h-1zM262,519h1v1h-1zM251,519h1v1h-1zM292,520h1v1h-1zM209,513h1v1h-1zM326,522h1v1h-1zM418,516h1v1h-1zM440,516h1v1h-1zM114,513h1v1h-1zM178,516h1v1h-1zM365,522h1v1h-1zM201,518h1v1h-1zM387,519h1v1h-1zM421,521h1v1h-1zM72,516h1v1h-1zM159,521h1v1h-1zM494,514h1v1h-1zM95,518h1v1h-1zM232,514h1v1h-1zM273,515h1v1h-1zM296,517h1v1h-1zM452,517h1v1h-1zM539,522h1v1h-1zM505,520h1v1h-1zM265,520h1v1h-1zM182,513h1v1h-1zM422,522h1v1h-1zM433,522h1v1h-1zM410,520h1v1h-1zM380,516h1v1h-1zM402,516h1v1h-1zM391,516h1v1h-1zM88,515h1v1h-1zM163,518h1v1h-1zM182,522h1v1h-1zM148,520h1v1h-1zM383,521h1v1h-1zM98,519h1v1h-1zM266,521h1v1h-1zM277,521h1v1h-1zM194,514h1v1h-1zM269,517h1v1h-1zM258,517h1v1h-1zM183,514h1v1h-1zM392,517h1v1h-1zM444,518h1v1h-1zM322,520h1v1h-1zM384,513h1v1h-1zM175,519h1v1h-1zM208,516h1v1h-1zM144,522h1v1h-1zM110,520h1v1h-1zM417,519h1v1h-1zM91,516h1v1h-1zM102,516h1v1h-1zM281,518h1v1h-1zM543,515h1v1h-1zM334,521h1v1h-1zM448,515h1v1h-1zM75,517h1v1h-1zM103,517h1v1h-1zM178,520h1v1h-1zM421,516h1v1h-1zM95,513h1v1h-1zM170,516h1v1h-1zM357,522h1v1h-1zM201,522h1v1h-1zM106,522h1v1h-1zM84,522h1v1h-1zM524,519h1v1h-1zM128,519h1v1h-1zM231,513h1v1h-1zM433,517h1v1h-1zM148,515h1v1h-1zM360,514h1v1h-1zM372,516h1v1h-1zM121,516h1v1h-1zM333,515h1v1h-1zM258,521h1v1h-1zM247,521h1v1h-1zM250,517h1v1h-1zM395,517h1v1h-1zM361,515h1v1h-1zM133,517h1v1h-1zM394,521h1v1h-1zM409,519h1v1h-1zM523,513h1v1h-1zM295,515h1v1h-1zM448,519h1v1h-1zM523,522h1v1h-1zM512,522h1v1h-1zM186,519h1v1h-1zM209,521h1v1h-1zM398,518h1v1h-1zM421,520h1v1h-1zM147,518h1v1h-1zM304,520h1v1h-1zM296,516h1v1h-1zM337,517h1v1h-1zM231,517h1v1h-1zM246,515h1v1h-1zM215,518h1v1h-1zM383,520h1v1h-1zM330,514h1v1h-1zM235,514h1v1h-1zM322,519h1v1h-1zM310,517h1v1h-1zM467,519h1v1h-1zM291,513h1v1h-1zM257,520h1v1h-1zM364,515h1v1h-1zM428,518h1v1h-1zM174,522h1v1h-1zM394,516h1v1h-1zM409,514h1v1h-1zM143,516h1v1h-1zM409,523h1v1h-1zM326,516h1v1h-1zM303,514h1v1h-1zM448,514h1v1h-1zM75,516h1v1h-1zM105,517h1v1h-1zM242,513h1v1h-1zM470,520h1v1h-1zM189,519h1v1h-1zM219,520h1v1h-1zM253,522h1v1h-1zM159,515h1v1h-1zM170,515h1v1h-1zM167,519h1v1h-1zM390,518h1v1h-1zM443,521h1v1h-1zM273,518h1v1h-1zM318,517h1v1h-1zM329,517h1v1h-1zM455,513h1v1h-1zM246,519h1v1h-1zM349,513h1v1h-1zM360,513h1v1h-1zM215,522h1v1h-1zM204,522h1v1h-1zM121,515h1v1h-1zM162,516h1v1h-1zM416,521h1v1h-1zM322,514h1v1h-1zM113,520h1v1h-1zM90,518h1v1h-1zM531,517h1v1h-1zM227,514h1v1h-1zM280,517h1v1h-1zM193,521h1v1h-1zM428,513h1v1h-1zM185,517h1v1h-1zM249,520h1v1h-1zM174,517h1v1h-1zM177,513h1v1h-1zM230,516h1v1h-1zM155,513h1v1h-1zM375,516h1v1h-1zM143,520h1v1h-1zM166,522h1v1h-1zM83,515h1v1h-1zM124,516h1v1h-1zM135,516h1v1h-1zM378,512h1v1h-1zM292,518h1v1h-1zM314,518h1v1h-1zM344,519h1v1h-1zM325,515h1v1h-1zM501,521h1v1h-1zM108,517h1v1h-1zM167,514h1v1h-1zM387,517h1v1h-1zM368,513h1v1h-1zM454,516h1v1h-1zM379,522h1v1h-1zM337,516h1v1h-1zM412,519h1v1h-1zM117,522h1v1h-1zM109,518h1v1h-1zM120,518h1v1h-1zM538,515h1v1h-1zM329,521h1v1h-1zM276,515h1v1h-1zM67,521h1v1h-1zM78,521h1v1h-1zM298,524h1v1h-1zM204,517h1v1h-1zM435,520h1v1h-1zM416,516h1v1h-1zM196,522h1v1h-1zM162,520h1v1h-1zM113,515h1v1h-1zM363,519h1v1h-1zM90,522h1v1h-1zM542,521h1v1h-1zM112,519h1v1h-1zM477,513h1v1h-1zM260,515h1v1h-1zM477,522h1v1h-1zM417,517h1v1h-1zM394,515h1v1h-1zM450,514h1v1h-1zM241,520h1v1h-1zM230,520h1v1h-1zM158,513h1v1h-1zM292,513h1v1h-1zM442,519h1v1h-1zM93,514h1v1h-1zM344,523h1v1h-1zM85,519h1v1h-1zM108,521h1v1h-1zM211,515h1v1h-1zM454,520h1v1h-1zM420,518h1v1h-1zM117,517h1v1h-1zM423,514h1v1h-1zM120,513h1v1h-1zM337,520h1v1h-1zM423,523h1v1h-1zM340,516h1v1h-1zM515,517h1v1h-1zM142,519h1v1h-1zM287,519h1v1h-1zM279,515h1v1h-1zM245,513h1v1h-1zM424,515h1v1h-1zM413,515h1v1h-1zM256,522h1v1h-1zM215,521h1v1h-1zM374,514h1v1h-1zM146,516h1v1h-1zM299,520h1v1h-1zM291,516h1v1h-1zM332,517h1v1h-1zM268,514h1v1h-1zM272,512h1v1h-1zM321,517h1v1h-1zM115,519h1v1h-1zM469,513h1v1h-1zM439,518h1v1h-1zM450,518h1v1h-1zM158,517h1v1h-1zM199,518h1v1h-1zM367,520h1v1h-1zM325,514h1v1h-1zM105,520h1v1h-1zM219,514h1v1h-1zM283,517h1v1h-1zM286,513h1v1h-1zM443,515h1v1h-1zM454,515h1v1h-1zM222,519h1v1h-1zM431,513h1v1h-1zM203,515h1v1h-1zM404,514h1v1h-1zM161,518h1v1h-1zM306,518h1v1h-1zM381,521h1v1h-1zM153,514h1v1h-1zM298,514h1v1h-1zM78,520h1v1h-1zM530,519h1v1h-1zM100,517h1v1h-1zM134,519h1v1h-1zM424,519h1v1h-1zM499,522h1v1h-1zM488,522h1v1h-1zM195,516h1v1h-1zM229,518h1v1h-1zM397,520h1v1h-1zM321,512h1v1h-1zM355,514h1v1h-1zM123,518h1v1h-1zM541,515h1v1h-1zM321,521h1v1h-1zM257,518h1v1h-1zM332,521h1v1h-1zM305,513h1v1h-1zM522,520h1v1h-1zM439,513h1v1h-1zM514,516h1v1h-1zM143,514h1v1h-1zM230,519h1v1h-1zM210,513h1v1h-1zM199,513h1v1h-1zM427,520h1v1h-1zM450,513h1v1h-1zM124,519h1v1h-1zM199,522h1v1h-1zM168,516h1v1h-1zM191,518h1v1h-1zM336,518h1v1h-1zM317,514h1v1h-1zM138,521h1v1h-1zM431,517h1v1h-1zM420,517h1v1h-1zM203,519h1v1h-1zM244,520h1v1h-1zM184,515h1v1h-1zM393,518h1v1h-1zM150,522h1v1h-1zM119,516h1v1h-1zM217,521h1v1h-1zM276,518h1v1h-1zM339,519h1v1h-1zM351,521h1v1h-1zM279,514h1v1h-1zM507,521h1v1h-1zM100,521h1v1h-1zM111,521h1v1h-1zM256,521h1v1h-1zM173,514h1v1h-1zM248,517h1v1h-1zM301,520h1v1h-1zM382,517h1v1h-1zM446,520h1v1h-1zM397,515h1v1h-1zM374,513h1v1h-1zM229,522h1v1h-1zM146,515h1v1h-1zM123,522h1v1h-1zM104,518h1v1h-1zM241,514h1v1h-1zM305,517h1v1h-1zM461,517h1v1h-1zM188,517h1v1h-1zM93,517h1v1h-1zM168,520h1v1h-1zM191,522h1v1h-1zM157,520h1v1h-1zM358,519h1v1h-1zM85,522h1v1h-1zM350,515h1v1h-1zM130,521h1v1h-1zM66,518h1v1h-1zM252,519h1v1h-1zM445,514h1v1h-1zM202,518h1v1h-1zM161,517h1v1h-1zM468,516h1v1h-1zM142,522h1v1h-1zM134,518h1v1h-1zM111,516h1v1h-1zM100,516h1v1h-1zM331,519h1v1h-1zM343,521h1v1h-1zM301,515h1v1h-1zM446,515h1v1h-1zM248,521h1v1h-1zM229,517h1v1h-1zM206,515h1v1h-1zM385,517h1v1h-1zM449,520h1v1h-1zM396,514h1v1h-1zM198,520h1v1h-1zM104,513h1v1h-1zM145,514h1v1h-1zM104,522h1v1h-1zM491,513h1v1h-1zM271,519h1v1h-1zM491,522h1v1h-1zM408,515h1v1h-1zM483,518h1v1h-1zM210,521h1v1h-1zM464,514h1v1h-1zM358,514h1v1h-1zM149,520h1v1h-1zM130,516h1v1h-1zM294,520h1v1h-1zM252,514h1v1h-1zM495,519h1v1h-1zM88,519h1v1h-1zM476,515h1v1h-1zM244,519h1v1h-1zM202,513h1v1h-1zM453,522h1v1h-1zM426,514h1v1h-1zM217,520h1v1h-1zM351,520h1v1h-1zM320,514h1v1h-1zM309,514h1v1h-1zM134,522h1v1h-1zM226,516h1v1h-1zM278,517h1v1h-1zM301,519h1v1h-1zM438,515h1v1h-1zM195,519h1v1h-1zM281,522h1v1h-1zM259,522h1v1h-1zM206,519h1v1h-1zM321,515h1v1h-1zM164,522h1v1h-1zM156,518h1v1h-1zM282,514h1v1h-1zM103,521h1v1h-1zM84,517h1v1h-1zM472,513h1v1h-1zM240,517h1v1h-1zM274,519h1v1h-1zM221,522h1v1h-1zM149,515h1v1h-1zM335,516h1v1h-1zM126,522h1v1h-1zM350,514h1v1h-1zM171,521h1v1h-1zM88,514h1v1h-1zM76,512h1v1h-1zM244,514h1v1h-1zM453,517h1v1h-1zM403,516h1v1h-1zM320,518h1v1h-1zM301,514h1v1h-1zM92,520h1v1h-1zM376,517h1v1h-1zM270,517h1v1h-1zM251,513h1v1h-1zM430,515h1v1h-1zM187,519h1v1h-1zM156,513h1v1h-1zM209,516h1v1h-1zM220,516h1v1h-1zM354,516h1v1h-1zM418,519h1v1h-1zM73,515h1v1h-1zM338,517h1v1h-1zM95,521h1v1h-1zM106,521h1v1h-1zM240,521h1v1h-1zM157,514h1v1h-1zM232,517h1v1h-1zM366,517h1v1h-1zM377,517h1v1h-1zM149,519h1v1h-1zM213,522h1v1h-1zM118,513h1v1h-1zM335,520h1v1h-1zM241,382h1v1h-1zM483,377h1v1h-1zM114,435h1v1h-1zM191,447h1v1h-1zM275,449h1v1h-1zM292,448h1v1h-1zM112,462h1v1h-1zM142,485h1v1h-1zM145,493h1v1h-1zM68,502h1v1h-1zM118,506h1v1h-1zM127,505h1v1h-1zM160,510h1v1h-1zM202,510h1v1h-1zM244,499h1v1h-1zM243,509h1v1h-1zM295,498h1v1h-1zM295,504h1v1h-1zM362,487h1v1h-1zM351,499h1v1h-1zM494,485h1v1h-1zM70,537h1v1h-1zM130,537h1v1h-1zM227,524h1v1h-1zM248,524h1v1h-1zM106,553h1v1h-1zM134,555h1v1h-1zM159,554h1v1h-1zM182,555h1v1h-1zM195,559h1v1h-1zM228,555h1v1h-1zM254,553h1v1h-1zM264,555h1v1h-1zM512,519h1v1h-1zM520,523h1v1h-1zM536,513h1v1h-1zM539,518h1v1h-1zM553,521h1v1h-1z" fill="#f0f000"/>
<rect x="64" y="197" width="518" height="2" fill="#000"/>
<rect x="64" y="197" width="2" height="388" fill="#000"/>
<rect x="64" y="583" width="518" height="2" fill="#000"/>
<rect x="581" y="197" width="1" height="388" fill="#000"/>
</svg>

<!-- axis labels -->
<div class="lbl" style="left:66px;top:184px;transform:none">MB/s</div>
<div class="lbl" style="left:563px;top:184px;transform:none">ms</div>
<div class="lbl" style="left:39px;top:192px;transform:scaleX(.93)">300</div>
<div class="lbl" style="left:39px;top:256px;transform:scaleX(.93)">250</div>
<div class="lbl" style="left:39px;top:320px;transform:scaleX(.93)">200</div>
<div class="lbl" style="left:39px;top:384px;transform:scaleX(.93)">150</div>
<div class="lbl" style="left:39px;top:448px;transform:scaleX(.93)">100</div>
<div class="lbl" style="left:46px;top:512px;transform:scaleX(.93)">50</div>
<div class="lbl" style="left:585px;top:192px">0.60</div>
<div class="lbl" style="left:585px;top:256px">0.50</div>
<div class="lbl" style="left:585px;top:320px">0.40</div>
<div class="lbl" style="left:585px;top:384px">0.30</div>
<div class="lbl" style="left:585px;top:448px">0.20</div>
<div class="lbl" style="left:585px;top:512px">0.10</div>
<div class="lbl" style="left:62px;top:588px">0</div>
<div class="lbl" style="left:113px;top:588px">2</div>
<div class="lbl" style="left:164px;top:588px">5</div>
<div class="lbl" style="left:216px;top:588px">7</div>
<div class="lbl" style="left:264px;top:588px">10</div>
<div class="lbl" style="left:316px;top:588px">12</div>
<div class="lbl" style="left:367px;top:588px">15</div>
<div class="lbl" style="left:418px;top:588px">17</div>
<div class="lbl" style="left:470px;top:588px">20</div>
<div class="lbl" style="left:521px;top:588px">22</div>
<div class="lbl" style="left:565px;top:588px;transform:none">25gB</div>

<!-- right panel -->
<div class="a" style="left:634px;top:176px;width:98px;height:26px;border:1px solid #2a78b4;border-radius:3px;background:linear-gradient(180deg,#eaf6fd 0,#dcf1fc 50%,#c4e8fa 50%,#b0ddf6 100%);box-shadow:inset 0 0 0 1px #44c0f4"></div>
<div class="t" style="left:669px;top:182px;font-size:14px;transform:scaleX(.965);transform-origin:0 0">Start</div>
<div class="sep" style="top:215px"></div>
<div class="a" style="left:629px;top:223px;width:16px;height:16px;border-radius:50%;border:1px solid #8a8a8a;background:#fdfdfd"></div>
<div class="a" style="left:632px;top:226px;width:10px;height:10px;border-radius:50%;border:1px solid #0c2a48;background:radial-gradient(circle at 40% 35%,#d8f4ff 0,#40b0e8 30%,#1a78b8 65%,#0c3a68 100%)"></div>
<div class="lbl" style="left:648px;top:224px;transform:scaleX(1.06)">Read</div>
<div class="a" style="left:629px;top:243px;width:16px;height:16px;border-radius:50%;border:1px solid #8a8a8a;background:#fdfdfd"></div>
<div class="a" style="left:631px;top:245px;width:12px;height:12px;border-radius:50%;border:1px solid #cfcfcf;background:radial-gradient(circle at 55% 60%,#f4f4f4 0,#e0e0e0 70%,#d0d0d0 100%)"></div>
<div class="lbl" style="left:648px;top:244px">Write</div>
<div class="sep" style="top:263px"></div>
<div class="cb" style="top:273px"></div>
<div class="lbl" style="left:648px;top:274px">Short stroke</div>
<div class="a" style="left:629px;top:297px;width:82px;height:24px;border:1px solid #a8a8a8;border-radius:2px;background:#fff"></div>
<div class="a" style="left:690px;top:299px;width:19px;height:10px;border:1px solid #c8c8c8;background:#ececec"></div>
<div class="a" style="left:690px;top:309px;width:19px;height:10px;border:1px solid #c8c8c8;background:#ececec"></div>
<div class="a" style="left:696px;top:302px;width:0;height:0;border-left:4px solid transparent;border-right:4px solid transparent;border-bottom:4px solid #9a9a9a"></div>
<div class="a" style="left:696px;top:312px;width:0;height:0;border-left:4px solid transparent;border-right:4px solid transparent;border-top:4px solid #9a9a9a"></div>
<div class="lbl" style="left:632px;top:301px;color:#8a8a8a">40</div>
<div class="lbl" style="left:727px;top:302px">gB</div>
<div class="cb" style="top:333px"></div>
<svg style="left:632px;top:336px" width="11" height="11" viewBox="0 0 11 11"><path d="M1.5 5.5 L4.5 9 L9.5 1" fill="none" stroke="#3c4c8c" stroke-width="2"/></svg>
<div class="lbl" style="left:649px;top:334px">Transfer rate</div>
<div class="sep" style="top:351px"></div>
<div class="lbl" style="left:629px;top:356px">Minimum</div>
<div class="box" style="top:373px">254.1 MB/s</div>
<div class="lbl" style="left:629px;top:397px">Maximum</div>
<div class="box" style="top:413px">267.0 MB/s</div>
<div class="lbl" style="left:629px;top:434px">Average</div>
<div class="box" style="top:452px">265.3 MB/s</div>
<div class="sep" style="top:478px"></div>
<div class="cb" style="top:487px"></div>
<svg style="left:632px;top:490px" width="11" height="11" viewBox="0 0 11 11"><path d="M1.5 5.5 L4.5 9 L9.5 1" fill="none" stroke="#3c4c8c" stroke-width="2"/></svg>
<div class="lbl" style="left:648px;top:489px">Access time</div>
<div class="box" style="top:505px;color:#f0f000">0.103 ms</div>
<div class="cb" style="top:529px"></div>
<svg style="left:632px;top:532px" width="11" height="11" viewBox="0 0 11 11"><path d="M1.5 5.5 L4.5 9 L9.5 1" fill="none" stroke="#3c4c8c" stroke-width="2"/></svg>
<div class="lbl" style="left:648px;top:530px;transform:scaleX(.94)">Burst rate</div>
<div class="box" style="top:547px;color:#fff">192.4 MB/s</div>
<div class="lbl" style="left:629px;top:570px">CPU usage</div>
<div class="box" style="top:587px;color:#fff">1.0%</div>

</body></html>
